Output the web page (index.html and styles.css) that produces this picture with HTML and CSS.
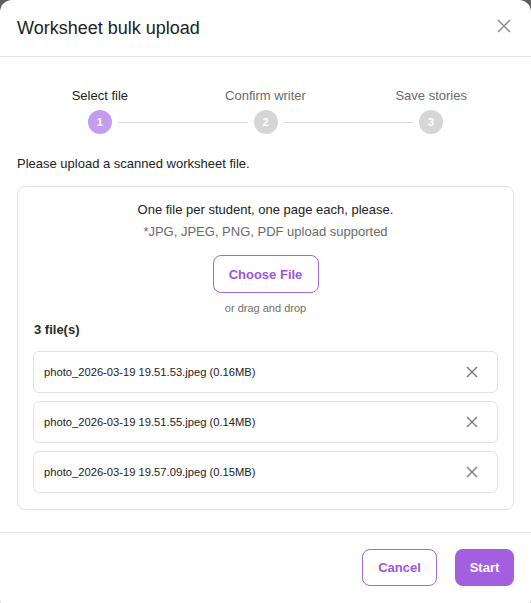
FILE: index.html
```html
<!DOCTYPE html>
<html>
<head>
<meta charset="utf-8">
<link rel="stylesheet" href="styles.css">
</head>
<body>
<div class="dialog">
  <div class="header">
    <h1 class="title">Worksheet bulk upload</h1>
    <button class="close" aria-label="Close">
      <svg width="14" height="14" viewBox="0 0 14 14"><path d="M1 1L13 13M13 1L1 13" stroke="#8c8c8c" stroke-width="1.5" fill="none"/></svg>
    </button>
  </div>
  <div class="content">
    <div class="stepper">
      <div class="labels">
        <span class="label active">Select file</span>
        <span class="label">Confirm writer</span>
        <span class="label">Save stories</span>
      </div>
      <div class="track">
        <span></span>
        <span class="dot active">1</span>
        <span class="line"></span>
        <span class="dot">2</span>
        <span class="line"></span>
        <span class="dot">3</span>
        <span></span>
      </div>
    </div>
    <p class="intro">Please upload a scanned worksheet file.</p>
    <div class="dropzone">
      <p class="hint">One file per student, one page each, please.</p>
      <p class="sub">*JPG, JPEG, PNG, PDF upload supported</p>
      <button class="choose">Choose File</button>
      <p class="drag">or drag and drop</p>
      <p class="count">3 file(s)</p>
      <div class="files">
        <div class="file"><span>photo_2026-03-19 19.51.53.jpeg (0.16MB)</span><svg width="12" height="12" viewBox="0 0 12 12"><path d="M1 1L11 11M11 1L1 11" stroke="#7a7a7a" stroke-width="1.4" fill="none"/></svg></div>
        <div class="file"><span>photo_2026-03-19 19.51.55.jpeg (0.14MB)</span><svg width="12" height="12" viewBox="0 0 12 12"><path d="M1 1L11 11M11 1L1 11" stroke="#7a7a7a" stroke-width="1.4" fill="none"/></svg></div>
        <div class="file"><span>photo_2026-03-19 19.57.09.jpeg (0.15MB)</span><svg width="12" height="12" viewBox="0 0 12 12"><path d="M1 1L11 11M11 1L1 11" stroke="#7a7a7a" stroke-width="1.4" fill="none"/></svg></div>
      </div>
    </div>
  </div>
  <div class="footer">
    <button class="btn outline">Cancel</button>
    <button class="btn filled">Start</button>
  </div>
</div>
</body>
</html>
```
FILE: styles.css
```css
html, body {
  margin: 0;
  padding: 0;
  height: 603px;
  overflow: hidden;
  background: #5e5e5e;
}
body {
  font-family: "Liberation Sans", Arial, sans-serif;
  color: #222;
}
.dialog {
  width: 531px;
  height: 612px;
  background: #fff;
  border-radius: 12px;
  box-sizing: border-box;
}
.header {
  height: 57px;
  display: flex;
  align-items: center;
  justify-content: space-between;
  padding: 0 20px 0 17px;
  border-bottom: 1px solid #e6e6e6;
  box-sizing: border-box;
}
.title {
  margin: 0;
  font-size: 18px;
  font-weight: normal;
  color: #222;
  line-height: 24px;
}
.close {
  border: 0;
  background: none;
  padding: 0;
  width: 14px;
  height: 14px;
  display: flex;
  margin-bottom: 4px;
}
.content {
  padding: 0 17px;
}
.stepper {
  padding-top: 31px;
}
.labels {
  display: grid;
  grid-template-columns: 1fr 1fr 1fr;
  font-size: 13px;
  line-height: 16px;
  color: #6a6a6a;
  text-align: center;
}
.label.active {
  color: #222;
}
.track {
  margin-top: 6px;
  display: grid;
  grid-template-columns: 1fr 24px 2fr 24px 2fr 24px 1fr;
  align-items: center;
  height: 24px;
}
.dot {
  width: 24px;
  height: 24px;
  border-radius: 50%;
  background: #d6d6d6;
  color: #fff;
  font-size: 11px;
  font-weight: bold;
  display: flex;
  align-items: center;
  justify-content: center;
}
.dot.active {
  background: #c39cf0;
}
.line {
  height: 1px;
  background: #d8d8d8;
  margin: 0 6px;
}
.intro {
  margin: 22px 0 0;
  font-size: 13px;
  line-height: 16px;
}
.dropzone {
  margin-top: 14px;
  border: 1px solid #e2e2e2;
  border-radius: 8px;
  padding: 15px 15px 16px;
  display: flex;
  flex-direction: column;
  align-items: center;
}
.dropzone p {
  margin: 0;
}
.hint {
  font-size: 13px;
  line-height: 16px;
}
.sub {
  margin-top: 6px !important;
  font-size: 13px;
  line-height: 16px;
  color: #6a6a6a;
}
.choose {
  margin-top: 15px;
  width: 106px;
  height: 38px;
  border: 1px solid #a766e2;
  border-radius: 8px;
  background: #fff;
  color: #9d55dd;
  font-family: inherit;
  font-size: 13px;
  font-weight: bold;
}
.drag {
  margin-top: 8px !important;
  font-size: 11px;
  line-height: 14px;
  color: #6f6f6f;
}
.count {
  align-self: stretch;
  margin-top: 7px !important;
  font-size: 13px;
  line-height: 16px;
  font-weight: bold;
  color: #2a2a2a;
  padding-left: 1px;
}
.files {
  align-self: stretch;
  margin-top: 13px;
  display: flex;
  flex-direction: column;
  gap: 8px;
}
.file {
  height: 42px;
  border: 1px solid #e2e2e2;
  border-radius: 6px;
  box-sizing: border-box;
  display: flex;
  align-items: center;
  justify-content: space-between;
  padding: 0 19px 0 10px;
  font-size: 11.2px;
  color: #222;
}
.footer {
  margin-top: 22px;
  border-top: 1px solid #e6e6e6;
  padding: 16px 17px 0;
  display: flex;
  justify-content: flex-end;
  gap: 18px;
}
.btn {
  height: 37px;
  border-radius: 8px;
  font-family: inherit;
  font-size: 13px;
  font-weight: bold;
  box-sizing: border-box;
}
.btn.outline {
  width: 75px;
  border: 1px solid #a766e2;
  background: #fff;
  color: #9d55dd;
}
.btn.filled {
  width: 59px;
  border: 0;
  background: #a45ee0;
  color: #fff;
}
```
